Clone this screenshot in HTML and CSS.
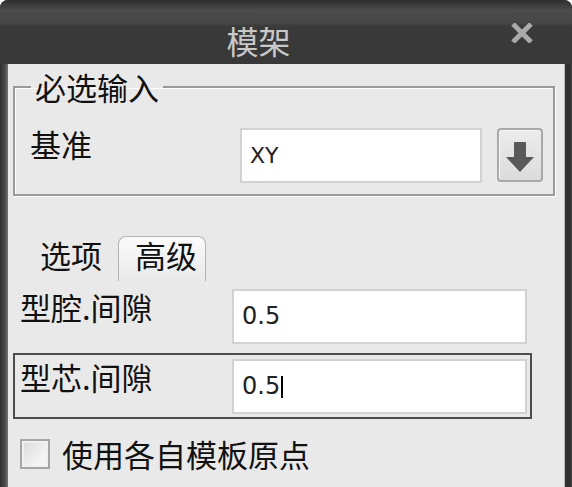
FILE: index.html
```html
<!DOCTYPE html>
<html lang="zh-CN">
<head>
<meta charset="utf-8">
<title>模架</title>
<link rel="stylesheet" href="styles.css">
</head>
<body>
<div class="window">
  <div class="titlebar">
    <span class="title">模架</span>
    <svg class="close" width="22" height="20" viewBox="0 0 22 20" aria-label="关闭">
      <path d="M2 1 L20 19 M20 1 L2 19" stroke="#a9a9a9" stroke-width="5" fill="none"/>
    </svg>
  </div>
  <div class="frame">
    <div class="content">
      <fieldset class="group">
        <legend>必选输入</legend>
        <div class="group-row">
          <span class="label">基准</span>
          <div class="input xy">XY</div>
          <button class="btn" type="button">
            <svg width="28" height="30" viewBox="0 0 28 30">
              <path d="M8 0 H20 V15 H28 L14 30 L0 15 H8 Z" fill="#5a5a5a"/>
            </svg>
          </button>
        </div>
      </fieldset>

      <div class="tabs">
        <span class="tab">选项</span>
        <span class="tab active">高级</span>
      </div>

      <div class="field">
        <span class="label">型腔.间隙</span>
        <div class="input num">0.5</div>
      </div>
      <div class="field focus">
        <span class="label">型芯.间隙</span>
        <div class="input num">0.5<span class="caret"></span></div>
      </div>

      <div class="check">
        <span class="box"></span>
        <span class="check-label">使用各自模板原点</span>
      </div>
    </div>
  </div>
</div>
</body>
</html>
```
FILE: styles.css
```css
html, body {
  margin: 0;
  padding: 0;
  background: #ffffff;
}

.window {
  width: 572px;
  height: 487px;
  display: flex;
  flex-direction: column;
  border-radius: 8px 8px 0 0;
  overflow: hidden;
  background: #353535;
}

.titlebar {
  height: 64px;
  flex: none;
  display: flex;
  align-items: center;
  padding-right: 39px;
  background: linear-gradient(#2c2c2c 0, #3a3a3a 4px, #444 8px, #4b4b4b 10px, #474747 23px, #3a3a3a 26px, #383838 100%);
}

.title {
  flex: 1;
  text-align: center;
  font-family: "Noto Sans CJK SC", sans-serif;
  font-size: 32px;
  line-height: 34px;
  color: #c9c9c9;
  padding-top: 16px;
  padding-left: 6px;
}

.close {
  flex: none;
  margin-top: 2px;
}

.frame {
  flex: 1;
  display: flex;
  padding: 0 8px;
  background:
    linear-gradient(to right, #2e2e2e 0, #3d3d3d 3px, #555 6px, #777 8px, transparent 8px),
    linear-gradient(to left, #474747 0, #2f2f2f 2px, #333 7px, #bdbdbd 7px, #bdbdbd 8px, transparent 8px),
    #353535;
}

.content {
  flex: 1;
  background: #e9e9e9;
  font-family: "Noto Sans CJK SC", sans-serif;
  color: #111;
  font-size: 31px;
  line-height: 31px;
}

.group {
  margin: 7px 9px 0 5px;
  padding: 26px 10px 11px 15px;
  border: 2px solid #9a9a9a;
  box-shadow: 1px 1px 0 #fdfdfd, inset 1px 1px 0 #fdfdfd;
}

.group legend {
  padding: 0 4px;
  margin-left: 1px;
  line-height: 31px;
}

.group-row {
  display: flex;
  align-items: flex-start;
}

.group-row .label {
  width: 210px;
  flex: none;
}

.input {
  box-sizing: border-box;
  background: #ffffff;
  border: 2px solid #d2d2d2;
  font-family: "DejaVu Sans", sans-serif;
  color: #222;
  display: flex;
  align-items: center;
  padding-left: 8px;
}

.input.xy {
  width: 242px;
  height: 55px;
  font-size: 22px;
  padding-top: 0;
}

.btn {
  margin-left: 15px;
  width: 46px;
  height: 54px;
  box-sizing: border-box;
  border: 2px solid #a9a9a9;
  border-radius: 4px;
  background: linear-gradient(#ececec, #dcdcdc);
  box-shadow: inset 1px 1px 0 #f6f6f6;
  padding: 0;
  display: flex;
  align-items: center;
  justify-content: center;
}

.btn svg {
  margin-top: 4px;
}

.tabs {
  display: flex;
  align-items: flex-end;
  margin-top: 40px;
  padding-left: 24px;
  height: 45px;
}

.tab {
  padding: 0 8px 11px 8px;
  line-height: 31px;
}

.tab.active {
  margin-left: 8px;
  padding: 2px 8px 11px 16px;
  border: 1px solid #b4b4b4;
  border-bottom: none;
  border-radius: 8px 8px 0 0;
  background: linear-gradient(#fbfbfb, #e9e9e9);
}

.field {
  display: flex;
  align-items: flex-start;
  margin: 2px 0 0 5px;
  width: 519px;
  box-sizing: border-box;
  padding: 4px 3px 3px 5px;
  border: 2px solid transparent;
}

.field + .field {
  margin-top: 4px;
}

.field .label {
  width: 212px;
  flex: none;
  margin-top: 2px;
}

.field.focus {
  border-color: #4d4d4d;
}

.input.num {
  width: 295px;
  height: 55px;
  font-size: 24px;
}

.caret {
  display: inline-block;
  width: 2px;
  height: 22px;
  background: #000;
  margin-left: 1px;
}

.check {
  display: flex;
  align-items: center;
  margin: 19px 0 0 12px;
}

.box {
  width: 30px;
  height: 30px;
  box-sizing: border-box;
  border: 2px solid #a6a6a6;
  background: linear-gradient(135deg, #d8d8d8, #f4f4f4 70%);
  box-shadow: inset 0 0 0 2px #f0f0f0;
  flex: none;
}

.check-label {
  margin-left: 12px;
}
```
